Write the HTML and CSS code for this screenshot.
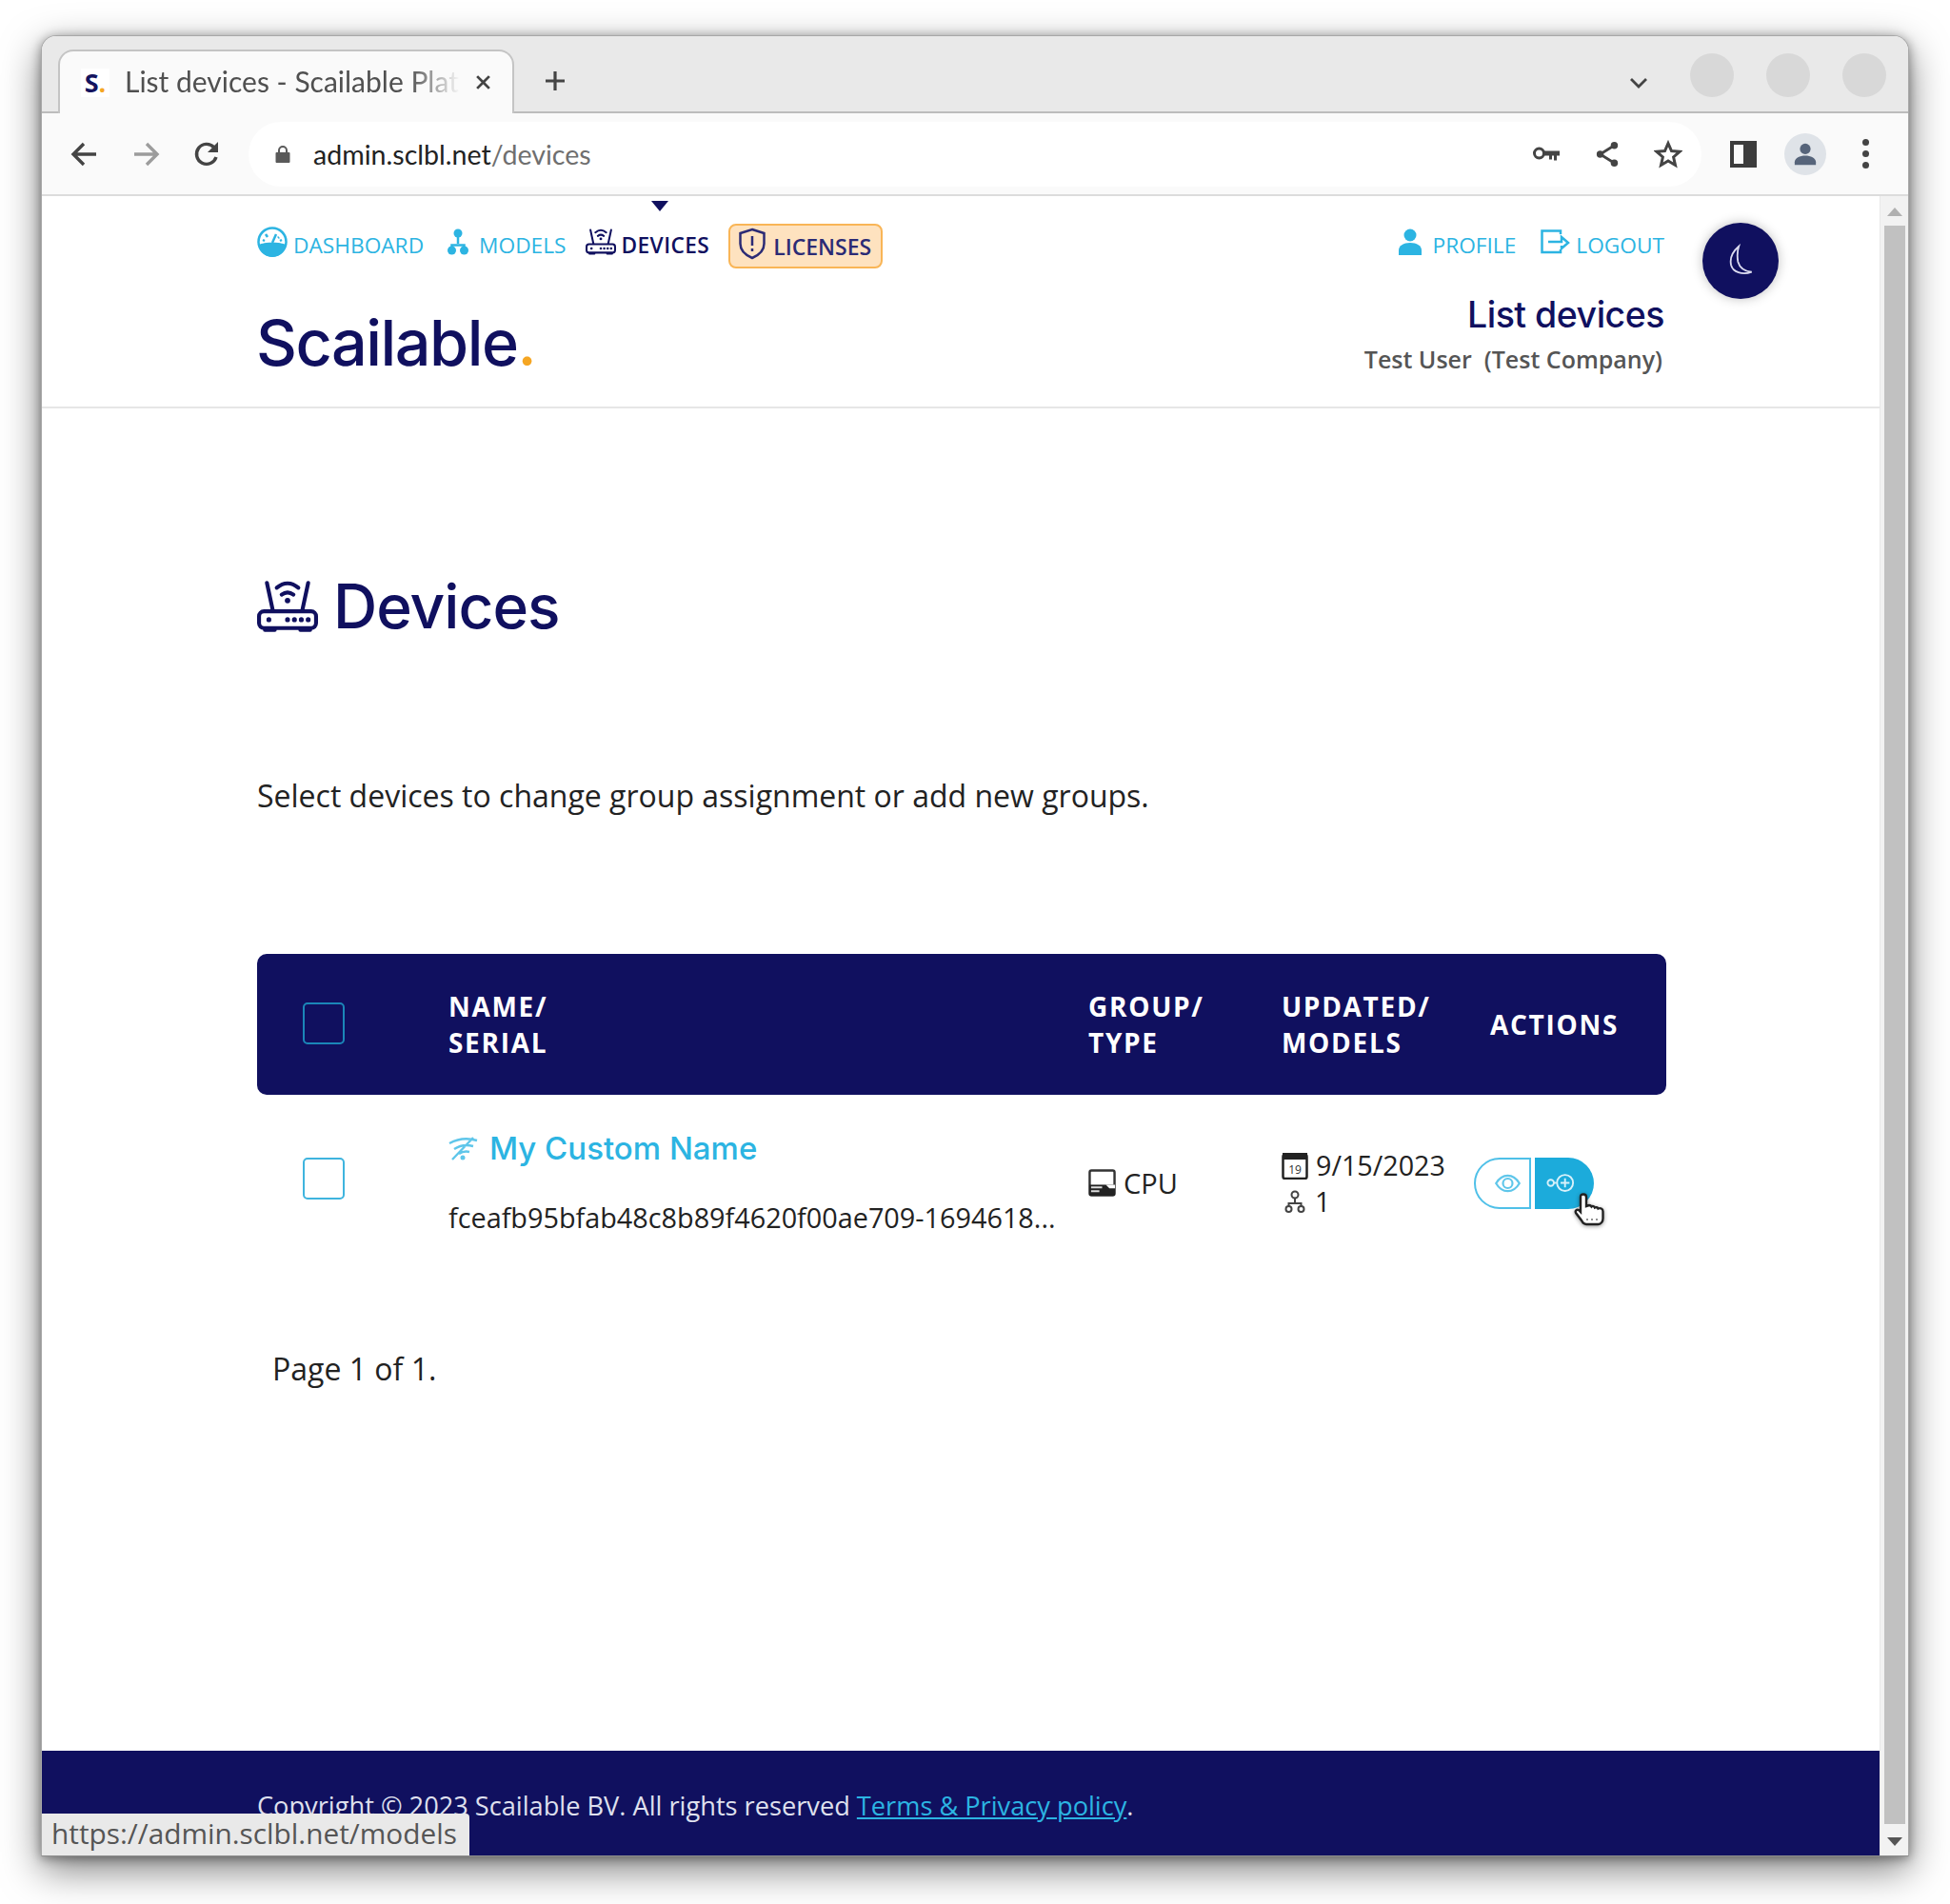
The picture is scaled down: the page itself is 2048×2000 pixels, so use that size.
FILE: index.html
```html
<!DOCTYPE html>
<html lang="en">
<head>
    <meta charset="UTF-8">
    <title>List devices - Scailable Platform</title>
    <link rel="stylesheet" href="styles.css">
</head>
<body>
<div class="window">
    <div class="tabstrip">
        <div class="tab">
            <span class="favicon">S<em>.</em></span>
            <span class="tab-title">List devices - Scailable Plat</span>
            <svg class="tab-close" viewBox="0 0 16 16"><path d="M2 2l12 12M14 2L2 14"/></svg>
        </div>
        <svg class="new-tab" viewBox="0 0 24 24"><path d="M12 2v20M2 12h20"/></svg>
        <svg class="tab-menu" viewBox="0 0 20 12"><path d="M2 2l8 8 8-8"/></svg>
        <span class="win-btn"></span>
        <span class="win-btn"></span>
        <span class="win-btn"></span>
    </div>
    <div class="toolbar">
        <svg class="tool" viewBox="0 0 32 32"><path d="M28 16H5M15 5L4 16l11 11"/></svg>
        <svg class="tool tool-off" viewBox="0 0 32 32"><path d="M4 16h23M17 5l11 11-11 11"/></svg>
        <svg class="tool" viewBox="0 0 32 32"><path d="M26 19a10.500 10.500 0 1 1-2.500-10.500L27 12"/><path class="solid" d="M28 3v11H17z"/></svg>
        <div class="omnibox">
            <svg class="lock" viewBox="0 0 16 20"><path d="M3 8V6a5 5 0 0 1 10 0v2h1.500a1 1 0 0 1 1 1v9a1 1 0 0 1-1 1h-13a1 1 0 0 1-1-1V9a1 1 0 0 1 1-1zm2 0h6V6a3 3 0 0 0-6 0z"/></svg>
            <span class="url">admin.sclbl.net<span class="url-path">/devices</span></span>
            <span class="omni-icons">
                <svg class="omni-icon" viewBox="0 0 30 20"><circle class="line" cx="7.500" cy="9" r="5"/><path d="M12 6.500h17v5h-3v5h-3v-5h-2v4h-3v-4h-6z"/></svg>
                <svg class="omni-icon share" viewBox="0 0 28 32"><path class="line" d="M22 6L6 16l16 10"/><circle cx="22" cy="6" r="4"/><circle cx="6" cy="16" r="4"/><circle cx="22" cy="26" r="4"/></svg>
                <svg class="omni-icon" viewBox="0 0 30 30"><path class="line" d="M15 3.500l3.500 8 8.500.8-6.400 5.700 1.900 8.500-7.500-4.500-7.500 4.500 1.900-8.500L3 12.300l8.500-.8z"/></svg>
            </span>
        </div>
        <span class="panel-icon"></span>
        <span class="avatar">
            <svg viewBox="0 0 28 28"><circle cx="14" cy="8" r="6"/><path d="M2 26v-3c0-5 6-7.500 12-7.500S26 18 26 23v3z"/></svg>
        </span>
        <span class="kebab"><i></i><i></i><i></i></span>
    </div>
    <div class="viewport">
        <div class="page">
            <header class="site-header">
                <div class="container">
                    <div class="nav-row">
                        <nav class="nav">
                            <a class="nav-link">
                                <svg class="nav-icon" width="32" height="34" viewBox="0 0 32 34"><circle class="ln" cx="16" cy="17" r="14.500"/><path class="fl" d="M2 20c5-3 23-3 28 0-1 8-7 13-14 13S3 28 2 20z"/><path class="ln" d="M16 18l4-9M9 9l2 3M23 12l-1 1M6 15l2 1M26 15l-2 1"/></svg>
                                DASHBOARD
                            </a>
                            <a class="nav-link nav-models">
                                <svg class="nav-icon" width="22" height="28" viewBox="0 0 22 28"><circle class="fl" cx="11" cy="5" r="4.500"/><path class="ln" d="M11 9v7M4.500 21v-3.500h13V21"/><circle class="fl" cx="4.500" cy="23" r="4.500"/><circle class="fl" cx="17.500" cy="23" r="4.500"/></svg>
                                MODELS
                            </a>
                            <a class="nav-link nav-active">
                                <svg class="nav-icon" width="32" height="30" viewBox="0 0 62 58"><use href="#router"/></svg>
                                DEVICES
                            </a>
                            <a class="nav-link nav-license">
                                <svg class="nav-icon" width="30" height="34" viewBox="0 0 30 34"><path class="ln" d="M15 2l12.500 4v11c0 7-5.500 12-12.500 15C8 29 2.500 24 2.500 17V6z"/><path class="ln" d="M15 9v10M15 22v3"/></svg>
                                LICENSES
                            </a>
                        </nav>
                        <nav class="nav nav-user">
                            <a class="nav-link nav-profile">
                                <svg class="nav-icon" width="26" height="28" viewBox="0 0 26 28"><circle class="fl" cx="13" cy="7" r="6.500"/><path class="fl" d="M1 28v-5c0-5 5-8 12-8s12 3 12 8v5z"/></svg>
                                PROFILE
                            </a>
                            <a class="nav-link">
                                <svg class="nav-icon" width="32" height="28" viewBox="0 0 32 28"><path class="ln" d="M22 6V2.500H2.500V25H22v-3"/><path class="ln" d="M9 14h14V9l7 6-7 6v-3"/></svg>
                                LOGOUT
                            </a>
                        </nav>
                    </div>
                    <div class="brand-row">
                        <div class="logo">Scailable<span class="logo-dot">.</span></div>
                        <div class="page-info">
                            <div class="page-name">List devices</div>
                            <div class="user-name">Test User&nbsp; (Test Company)</div>
                        </div>
                    </div>
                </div>
                <button class="moon-btn">
                    <svg viewBox="0 0 32 40"><path d="M14 3C7 9 3 16 5 25c2 8 13 12 24 8-9-1-14-5-16-12-1-6-1-12 1-18z"/></svg>
                </button>
            </header>
            <main class="container content">
                <h1 class="title">
                    <svg class="title-icon" viewBox="0 0 62 58"><use href="#router"/></svg>
                    Devices
                </h1>
                <p class="intro">Select devices to change group assignment or add new groups.</p>
                <div class="table-head grid-row">
                    <span class="check check-dark"></span>
                    <span>NAME/<br>SERIAL</span>
                    <span>GROUP/<br>TYPE</span>
                    <span>UPDATED/<br>MODELS</span>
                    <span class="head-actions">ACTIONS</span>
                </div>
                <div class="table-row grid-row">
                    <span class="check"></span>
                    <div class="cell-name">
                        <a class="device-name">
                            <svg class="wifi-off" viewBox="0 0 32 28"><path d="M1 9c9-5 19-6 29-3M6 15c6-4 13-5 20-3M11 20c3-2 7-3 11-2M4 26L26 3"/><circle class="dot" cx="15" cy="24" r="2.500"/></svg>
                            My Custom Name
                        </a>
                        <div class="serial">fceafb95bfab48c8b89f4620f00ae709-1694618...</div>
                    </div>
                    <div class="cell-type">
                        <svg class="cpu-icon" viewBox="0 0 30 30"><rect x="1.500" y="1.500" width="27" height="27" rx="2" fill="none" stroke="#333" stroke-width="2.500"/><path d="M1 17h28v12H1z" fill="#222"/><path d="M3 20h12M3 24h9" stroke="#ddd" stroke-width="2"/><path d="M19 17l4 4h6v-4z" fill="#fff"/></svg>
                        CPU
                    </div>
                    <div class="cell-meta">
                        <div class="meta-line">
                            <svg class="cal-icon" viewBox="0 0 28 30"><rect x="1.500" y="4" width="25" height="25" rx="2" fill="none" stroke="#222" stroke-width="2.500"/><path d="M1 2h26v7H1z" fill="#222"/><text x="14" y="24" class="cal-num">19</text></svg>
                            9/15/2023
                        </div>
                        <div class="meta-line">
                            <svg class="tree-icon" viewBox="0 0 22 24" fill="none" stroke="#444" stroke-width="2"><circle cx="11" cy="5" r="3.500"/><path d="M11 9v5M4.500 17v-3h13v3"/><circle cx="4.500" cy="20" r="3"/><circle cx="17.500" cy="20" r="3"/></svg>
                            <span class="count">1</span>
                        </div>
                    </div>
                    <div class="cell-actions">
                        <button class="act act-view">
                            <svg viewBox="0 0 30 22"><path d="M1.500 11C5 5 10 2 15 2s10 3 13.500 9C25 17 20 20 15 20S5 17 1.500 11z"/><circle cx="15" cy="11" r="5.500"/></svg>
                        </button>
                        <button class="act act-add">
                            <svg viewBox="0 0 32 22"><circle cx="5" cy="11" r="3.500"/><path d="M8.500 11h3"/><circle cx="21" cy="11" r="9"/><path d="M21 6v10M16 11h10"/></svg>
                        </button>
                        <svg class="hand" viewBox="0 0 34 36"><path d="M10 2.500c2 0 3 1 3 3V15l3-1c1 0 2 .5 2.500 1.500 1-1 3-.5 3.500 1 1-.5 3-.5 3.500 1 2-1 5 0 5 3V28c0 3-2 6-5 6H13c-3 0-4-2-5-4l-6-8c-1-2 1-4 3-3l2 2V5.500c0-2 1-3 3-3z"/><path class="hand-marks" d="M14 28v2M19 28v2M24 28v2"/></svg>
                    </div>
                </div>
                <p class="pager">Page 1 of 1.</p>
            </main>
            <footer class="site-footer">
                <div class="container">Copyright © 2023 Scailable BV. All rights reserved <a class="terms">Terms &amp; Privacy policy</a>.</div>
            </footer>
        </div>
        <div class="scrollbar">
            <span class="arrow arrow-up"></span>
            <span class="thumb"></span>
            <span class="arrow arrow-down"></span>
        </div>
        <div class="status-bubble">https://admin.sclbl.net/models</div>
    </div>
</div>

<svg class="defs" width="0" height="0">
    <symbol id="router" viewBox="0 0 62 58">
        <g fill="none" stroke="currentColor" stroke-width="4" stroke-linecap="round">
            <rect x="2" y="34" width="58" height="17" rx="5"/>
            <path d="M10 5l6 28M52 5l-6 28M20 10c7-6 15-6 22 0M25 17c4-3 8-3 12 0M8 53h10M44 53h10"/>
        </g>
        <g fill="currentColor">
            <circle cx="31" cy="23" r="2.800"/>
            <circle cx="12" cy="42.500" r="2.500"/><circle cx="31" cy="42.500" r="2.500"/><circle cx="38" cy="42.500" r="2.500"/><circle cx="45" cy="42.500" r="2.500"/><circle cx="52" cy="42.500" r="2.500"/>
        </g>
    </symbol>
</svg>
</body>
</html>
```

FILE: styles.css
```css
* {
    box-sizing: border-box;
}
html, body {
    height: 2000px;
}
body {
    margin: 0;
    padding-top: 37px;
    background: #fff;
    font-family: "Open Sans", sans-serif;
    color: #222;
}
.defs {
    position: absolute;
}
.window {
    width: 1962px;
    height: 1913px;
    margin-left: 43px;
    display: flex;
    flex-direction: column;
    border: 1px solid #a8a8a8;
    border-bottom-color: #8e8e8e;
    border-radius: 16px 16px 0 0;
    box-shadow: 0 14px 40px rgba(0, 0, 0, 0.5), 0 2px 12px rgba(0, 0, 0, 0.4);
    overflow: hidden;
    background: #fff;
}

/* browser chrome */
.tabstrip {
    height: 81px;
    flex: none;
    display: flex;
    align-items: flex-end;
    background: #e9e9e9;
    border-bottom: 2px solid #bcbcbc;
    padding-left: 17px;
    position: relative;
}
.tab {
    width: 479px;
    height: 67px;
    margin-bottom: -2px;
    display: flex;
    align-items: center;
    padding: 0 18px 0 22px;
    background: #fafafa;
    border: 2px solid #c4c4c4;
    border-bottom: none;
    border-radius: 16px 16px 0 0;
}
.favicon {
    width: 30px;
    height: 30px;
    flex: none;
    background: #fff;
    color: #14145f;
    font-weight: 700;
    font-size: 27px;
    line-height: 30px;
    text-align: center;
}
.favicon em {
    color: #f5a623;
    font-style: normal;
}
.tab-title {
    width: 352px;
    margin: -4px 0 0 16px;
    flex: none;
    overflow: hidden;
    white-space: nowrap;
    font-family: Lato, sans-serif;
    font-size: 30px;
    color: #505050;
    -webkit-mask-image: linear-gradient(to right, #000 85%, transparent 100%);
    mask-image: linear-gradient(to right, #000 85%, transparent 100%);
}
.tab-close {
    width: 17px;
    height: 17px;
    margin-left: 16px;
    fill: none;
    stroke: #444;
    stroke-width: 2.600;
}
.new-tab {
    width: 24px;
    height: 24px;
    margin: 0 0 20px 31px;
    fill: none;
    stroke: #444;
    stroke-width: 3.200;
}
.tab-menu {
    width: 20px;
    height: 12px;
    margin: 0 0 24px auto;
    fill: none;
    stroke: #444;
    stroke-width: 2.800;
}
.win-btn {
    width: 46px;
    height: 46px;
    margin: 0 0 15px 34px;
    border-radius: 50%;
    background: #d8d8d8;
}
.tab-menu + .win-btn {
    margin-left: 44px;
}
.win-btn:last-child {
    margin-right: 23px;
}
.toolbar {
    height: 87px;
    flex: none;
    display: flex;
    align-items: center;
    gap: 32px;
    padding: 0 29px 0 29px;
    background: #fafafa;
    border-bottom: 2px solid #dcdcdc;
}
.tool {
    width: 32px;
    height: 32px;
    flex: none;
    fill: none;
    stroke: #444;
    stroke-width: 3.400;
}
.tool-off {
    stroke: #9c9c9c;
}
.tool .solid {
    fill: #444;
    stroke: none;
}
.omnibox {
    width: 1526px;
    height: 68px;
    flex: none;
    margin-left: -4px;
    display: flex;
    align-items: center;
    padding: 0 20px 0 28px;
    background: #fff;
    border-radius: 34px;
}
.lock {
    width: 16px;
    height: 20px;
    fill: #5a5a5a;
}
.url {
    margin-left: 24px;
    font-family: Lato, sans-serif;
    font-size: 28.600px;
    color: #222;
}
.url-path {
    color: #6f6f6f;
}
.omni-icons {
    margin-left: auto;
    display: flex;
    align-items: center;
    gap: 36px;
}
.omni-icon {
    width: 30px;
    height: 30px;
    fill: #444;
}
.omni-icon .line {
    fill: none;
    stroke: #444;
    stroke-width: 3;
}
.share {
    width: 26px;
}
.panel-icon {
    width: 28px;
    height: 28px;
    flex: none;
    margin-left: -2px;
    border: 4px solid #3c3c3c;
    border-right-width: 14px;
}
.avatar {
    width: 44px;
    height: 44px;
    flex: none;
    margin-left: -3px;
    border-radius: 50%;
    background: #dfe3e8;
    display: flex;
    align-items: center;
    justify-content: center;
}
.avatar svg {
    width: 26px;
    height: 26px;
    fill: #56647a;
}
.kebab {
    width: 8px;
    flex: none;
    display: flex;
    flex-direction: column;
    gap: 5px;
    margin-left: 6px;
}
.kebab i {
    width: 7px;
    height: 7px;
    border-radius: 50%;
    background: #444;
}

/* page */
.viewport {
    flex: 1;
    min-height: 0;
    display: flex;
    position: relative;
}
.page {
    flex: 1;
    min-width: 0;
    display: flex;
    flex-direction: column;
}
.container {
    width: 1480px;
    margin-left: 226px;
}
.site-header {
    height: 223px;
    flex: none;
    border-bottom: 2px solid #e6e6e6;
    padding-top: 29px;
    position: relative;
}
.nav-row {
    display: flex;
    justify-content: space-between;
    height: 47px;
}
.nav {
    display: flex;
    align-items: center;
    gap: 20px;
}
.nav-user {
    gap: 25px;
    margin-right: 2px;
}
.nav-link {
    display: flex;
    align-items: center;
    gap: 6px;
    margin-top: -3px;
    font-size: 22.700px;
    color: #2cb4e2;
    position: relative;
}
.nav-icon {
    color: inherit;
    margin-top: -6px;
    flex: none;
}
.nav-icon .ln {
    fill: none;
    stroke: currentColor;
    stroke-width: 2.500;
}
.nav-icon .fl {
    fill: currentColor;
}
.nav-models {
    gap: 11px;
    margin-left: 5px;
}
.nav-profile {
    gap: 11px;
}
.nav-active {
    color: #10105f;
    font-weight: 600;
    letter-spacing: 0.400px;
}
.nav-active::before {
    content: "";
    position: absolute;
    top: -31px;
    left: 69px;
    border: 9px solid transparent;
    border-top: 11px solid #10105f;
    border-bottom: none;
}
.nav-license {
    height: 47px;
    margin-top: 0;
    padding: 0 10px 0 8px;
    background: #fee2bf;
    border: 2px solid #f9b556;
    border-radius: 8px;
    gap: 7px;
    font-size: 23px;
    color: #2b2b75;
    font-weight: 600;
}
.brand-row {
    display: flex;
    justify-content: space-between;
    align-items: center;
    height: 130px;
    margin-top: 10px;
}
.logo {
    font-family: Inter, sans-serif;
    font-size: 66.500px;
    font-weight: 500;
    letter-spacing: -1.500px;
    margin: 5px 0 0 -1px;
    color: #10105f;
}
.logo-dot {
    color: #f5a623;
}
.page-info {
    text-align: right;
    margin-top: -13px;
}
.page-name {
    font-family: Inter, sans-serif;
    font-weight: 500;
    font-size: 37.500px;
    letter-spacing: -0.500px;
    margin-right: 2px;
    color: #10105f;
}
.user-name {
    margin-top: 7px;
    margin-right: 4px;
    font-size: 25px;
    font-weight: 600;
    color: #555;
}
.moon-btn {
    position: absolute;
    left: 1744px;
    top: 28px;
    width: 80px;
    height: 80px;
    padding: 0;
    border: none;
    border-radius: 50%;
    background: #10105f;
    box-shadow: 0 0 12px rgba(0, 0, 0, 0.25);
    display: flex;
    align-items: center;
    justify-content: center;
}
.moon-btn svg {
    width: 30px;
    height: 36px;
    fill: none;
    stroke: #dcdcf0;
    stroke-width: 2;
}

.content {
    flex: 1;
    padding-top: 168px;
}
.title {
    margin: 0;
    display: flex;
    align-items: center;
    gap: 16px;
    font-family: Inter, sans-serif;
    font-size: 64px;
    font-weight: 500;
    letter-spacing: -1px;
    color: #10105f;
    line-height: 80px;
}
.title-icon {
    width: 64px;
    height: 60px;
}
.intro {
    margin: 137px 0 0;
    font-size: 32px;
    line-height: 44px;
}
.grid-row {
    display: grid;
    grid-template-columns: 201px 672px 203px 202px 1fr;
}
.table-head {
    margin-top: 144px;
    height: 148px;
    align-items: center;
    background: #10105f;
    border-radius: 10px;
    font-size: 28px;
    font-weight: 700;
    line-height: 38px;
    letter-spacing: 1.700px;
    color: #fff;
}
.head-actions {
    padding-left: 17px;
    white-space: nowrap;
}
.check {
    width: 44px;
    height: 44px;
    margin-left: 48px;
    border: 2px solid #3fb4de;
    border-radius: 5px;
    background: #fff;
}
.check-dark {
    margin-top: -2px;
    background: #10105f;
    border-color: #1b86b8;
}
.table-row {
    height: 176px;
    align-items: center;
    font-size: 28px;
}
.cell-name {
    padding-top: 8px;
    white-space: nowrap;
}
.cell-type, .cell-meta, .cell-actions {
    margin-top: 9px;
}
.device-name {
    display: flex;
    align-items: center;
    gap: 11px;
    font-family: Inter, sans-serif;
    font-size: 33px;
    font-weight: 500;
    color: #2cb4e2;
}
.wifi-off {
    width: 32px;
    height: 28px;
    fill: none;
    stroke: #5fc6ea;
    stroke-width: 2.400;
}
.wifi-off .dot {
    fill: #5fc6ea;
    stroke: none;
}
.serial {
    margin-top: 33px;
    font-size: 28.800px;
}
.cell-type {
    display: flex;
    align-items: center;
    gap: 8px;
    font-size: 29px;
}
.cpu-icon {
    width: 29px;
    height: 29px;
}
.meta-line {
    display: flex;
    align-items: center;
    gap: 8px;
    height: 38px;
    font-size: 28.700px;
}
.cal-icon {
    width: 28px;
    height: 30px;
}
.cal-num {
    font-size: 12px;
    text-anchor: middle;
    fill: #333;
}
.tree-icon {
    width: 22px;
    height: 24px;
    margin: 0 2px 0 3px;
}
.cell-actions {
    display: flex;
    gap: 4px;
    position: relative;
}
.act {
    height: 54px;
    padding: 0;
    display: flex;
    align-items: center;
    justify-content: center;
}
.act-view {
    width: 60px;
    background: #fff;
    border: 2px solid #4fc0e8;
    border-radius: 27px 0 0 27px;
}
.act-view svg {
    width: 29px;
    height: 20px;
    margin-left: 11px;
    fill: none;
    stroke: #5fc6ea;
    stroke-width: 2.400;
}
.act-add {
    width: 62px;
    background: #1cabdb;
    border: none;
    border-radius: 0 27px 27px 0;
}
.act-add svg {
    width: 30px;
    height: 21px;
    margin-right: 8px;
    fill: none;
    stroke: #d8f1fa;
    stroke-width: 2;
}
.hand {
    position: absolute;
    left: 105px;
    top: 36px;
    width: 34px;
    height: 36px;
    fill: #fff;
    stroke: #222;
    stroke-width: 2.400;
    filter: drop-shadow(0 1px 2px rgba(0, 0, 0, 0.4));
}
.hand-marks {
    stroke: #777;
    stroke-width: 1.600;
    fill: none;
}
.pager {
    margin: 90px 0 0 16px;
    font-size: 32px;
    line-height: 44px;
}
.site-footer {
    height: 110px;
    flex: none;
    background: #10105f;
    padding-top: 38px;
    font-size: 27.200px;
    line-height: 40px;
    color: #dfe0ee;
}
.terms {
    color: #2cb4e2;
    text-decoration: underline;
}
.scrollbar {
    width: 30px;
    flex: none;
    display: flex;
    flex-direction: column;
    align-items: center;
    background: #f2f2f2;
    border-left: 1px solid #e8e8e8;
    padding: 12px 0 10px;
}
.arrow {
    flex: none;
    border: 8px solid transparent;
}
.arrow-up {
    border-top: none;
    border-bottom: 9px solid #b0b0b0;
}
.arrow-down {
    border-bottom: none;
    border-top: 9px solid #555;
}
.thumb {
    flex: 1;
    width: 22px;
    margin: 10px 0 14px;
    background: #c1c1c1;
}
.status-bubble {
    position: absolute;
    left: 0;
    bottom: 0;
    width: 449px;
    height: 44px;
    padding-left: 10px;
    background: #e9e9e9;
    border-radius: 0 4px 0 0;
    font-family: "Open Sans", sans-serif;
    font-size: 29.800px;
    line-height: 42px;
    color: #555;
    white-space: nowrap;
}
```
